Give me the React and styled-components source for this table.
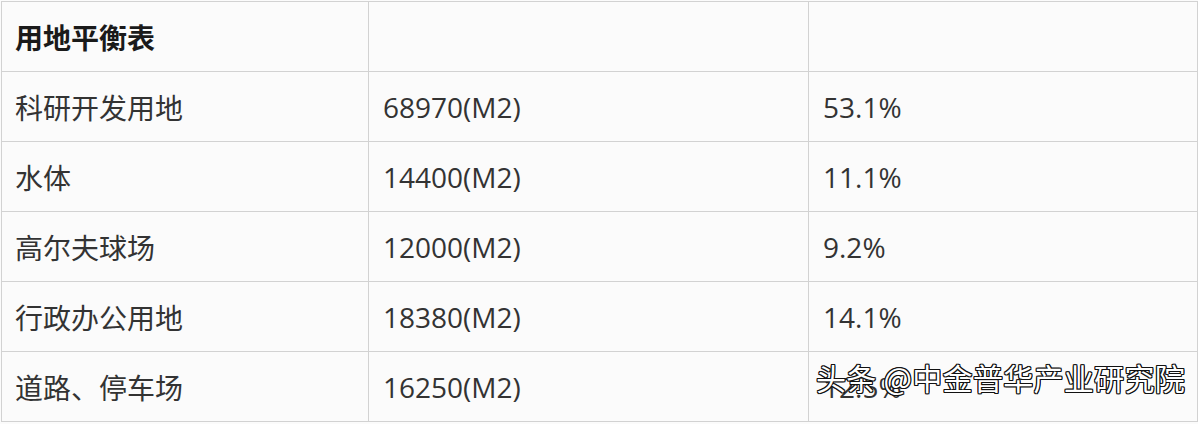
import React from 'react'
import styled, { createGlobalStyle } from 'styled-components'

const Global = createGlobalStyle`
  html, body {
    margin: 0;
    padding: 0;
    background: #ffffff;
  }
  body {
    font-family: "Open Sans", "Noto Sans", "Noto Sans CJK SC", sans-serif;
  }
`

const Page = styled.div`
  position: relative;
  width: 1198px;
  height: 424px;
  padding: 1px 0 0 1px;
  box-sizing: border-box;
  background: #fbfbfb;
  overflow: hidden;
`

const Table = styled.table`
  border-collapse: collapse;
  table-layout: fixed;
  width: 1196px;
`

const Cell = styled.td`
  height: 69px;
  padding: 0 0 0 ${({ num }) => (num ? 14 : 13)}px;
  border: 1px solid #d2d2d2;
  font-size: 28px;
  font-weight: ${({ head }) => (head ? 700 : 400)};
  color: ${({ head }) => (head ? '#1a1a1a' : '#333333')};
  font-family: ${({ num }) =>
    num
      ? '"Open Sans", "Noto Sans", "Noto Sans CJK SC", sans-serif'
      : '"Noto Sans CJK SC", "Noto Sans", sans-serif'};
  white-space: nowrap;
  vertical-align: middle;
`

const Watermark = styled.div`
  position: absolute;
  left: 816px;
  top: 355px;
  font-family: "Noto Sans CJK SC", "Noto Sans", sans-serif;
  font-size: 30px;
  color: #ffffff;
  letter-spacing: 0.3px;
  text-shadow:
    1px 1px 0 #111, -1px -1px 0 #111, 1px -1px 0 #111, -1px 1px 0 #111,
    1px 0 0 #111, -1px 0 0 #111, 0 1px 0 #111, 0 -1px 0 #111;
`

const rows = [
  ['科研开发用地', '68970(M2)', '53.1%'],
  ['水体', '14400(M2)', '11.1%'],
  ['高尔夫球场', '12000(M2)', '9.2%'],
  ['行政办公用地', '18380(M2)', '14.1%'],
  ['道路、停车场', '16250(M2)', '12.5%'],
]

export default function App() {
  return (
    <>
      <Global />
      <Page>
        <Table>
          <colgroup>
            <col style={{ width: 367 }} />
            <col style={{ width: 440 }} />
            <col style={{ width: 389 }} />
          </colgroup>
          <tbody>
            <tr>
              <Cell head>用地平衡表</Cell>
              <Cell />
              <Cell />
            </tr>
            {rows.map(([name, area, pct]) => (
              <tr key={name}>
                <Cell>{name}</Cell>
                <Cell num>{area}</Cell>
                <Cell num>{pct}</Cell>
              </tr>
            ))}
          </tbody>
        </Table>
        <Watermark>头条 @中金普华产业研究院</Watermark>
      </Page>
    </>
  )
}
